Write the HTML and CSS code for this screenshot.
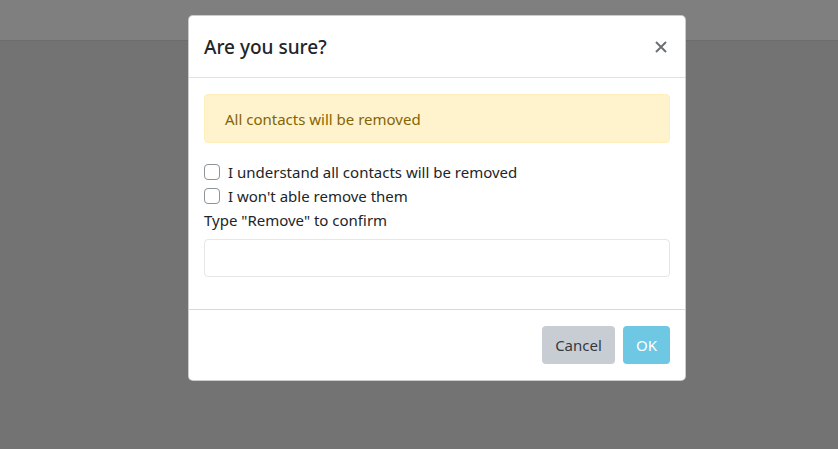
FILE: index.html
```html
<!DOCTYPE html>
<html lang="en">
<head>
<meta charset="utf-8">
<title>Are you sure?</title>
<link rel="stylesheet" href="styles.css">
</head>
<body>
<div class="page">
  <div class="topbar"></div>
</div>
<div class="backdrop">
  <div class="modal">
    <div class="modal-header">
      <h5 class="modal-title">Are you sure?</h5>
      <span class="close" aria-label="Close">
        <svg width="12" height="12" viewBox="0 0 12 12"><path d="M1 1 L11 11 M11 1 L1 11" stroke="#6c7176" stroke-width="2" stroke-linecap="butt" fill="none"/></svg>
      </span>
    </div>
    <div class="modal-body">
      <div class="alert">All contacts will be removed</div>
      <label class="check"><span class="box"></span>I understand all contacts will be removed</label>
      <label class="check"><span class="box"></span>I won't able remove them</label>
      <div class="form-group">
        <label class="lbl">Type "Remove" to confirm</label>
        <div class="input"></div>
      </div>
    </div>
    <div class="modal-footer">
      <button class="btn btn-cancel">Cancel</button>
      <button class="btn btn-ok">OK</button>
    </div>
  </div>
</div>
</body>
</html>
```

FILE: styles.css
```css
* { box-sizing: border-box; }
html, body { margin: 0; padding: 0; }
body {
  width: 838px;
  height: 449px;
  overflow: hidden;
  background: #e7e7e7;
  font-family: "Noto Sans", "Open Sans", sans-serif;
  font-size: 15px;
  line-height: 24px;
  color: #212529;
  position: relative;
}
.page { height: 449px; }
.topbar {
  height: 41px;
  background: #ffffff;
  border-bottom: 1px solid #d9d9d9;
}
.backdrop {
  position: absolute;
  inset: 0;
  background: rgba(0, 0, 0, 0.5);
  padding-top: 15px;
  padding-left: 188px;
}
.modal {
  width: 498px;
  background: #fff;
  border: 1px solid rgba(0, 0, 0, 0.2);
  border-radius: 5px;
  display: flex;
  flex-direction: column;
}
.modal-header {
  display: flex;
  justify-content: space-between;
  align-items: center;
  padding: 15px 18px 15px 15px;
  border-bottom: 1px solid #dee2e6;
  height: 62px;
}
.modal-title {
  margin: 0;
  font-size: 19px;
  font-weight: 500;
  line-height: 30px;
  color: #212529;
}
.close {
  display: flex;
  width: 12px;
  height: 12px;
  margin-top: 1px;
}
.modal-body {
  padding: 16px 15px 16px 15px;
  display: flex;
  flex-direction: column;
}
.alert {
  height: 49px;
  padding: 12px 20px;
  background: #fff3cd;
  border: 1px solid #ffeeba;
  border-radius: 4px;
  color: #856404;
  margin-bottom: 16px;
}
.check {
  display: flex;
  align-items: center;
  height: 24px;
  padding-top: 1px;
}
.box {
  width: 16px;
  height: 16px;
  border: 1px solid #8c949c;
  border-radius: 4px;
  margin-right: 8px;
  background: #fff;
}
.form-group { margin-bottom: 16px; }
.lbl { display: block; margin-bottom: 7px; padding-top: 1px; }
.input {
  height: 38px;
  border: 1px solid #e6e6e6;
  border-radius: 4px;
}
.modal-footer {
  display: flex;
  justify-content: flex-end;
  gap: 8px;
  padding: 16px 15px 16px 15px;
  border-top: 1px solid #d6d8db;
}
.btn {
  font-family: inherit;
  font-size: 15px;
  line-height: 24px;
  height: 38px;
  padding: 6px 0;
  border: 0;
  border-radius: 4px;
}
.btn-cancel { background: #c8cdd3; color: #343a40; width: 73px; }
.btn-ok { background: #6ec7e3; color: #fff; width: 47px; }
```
